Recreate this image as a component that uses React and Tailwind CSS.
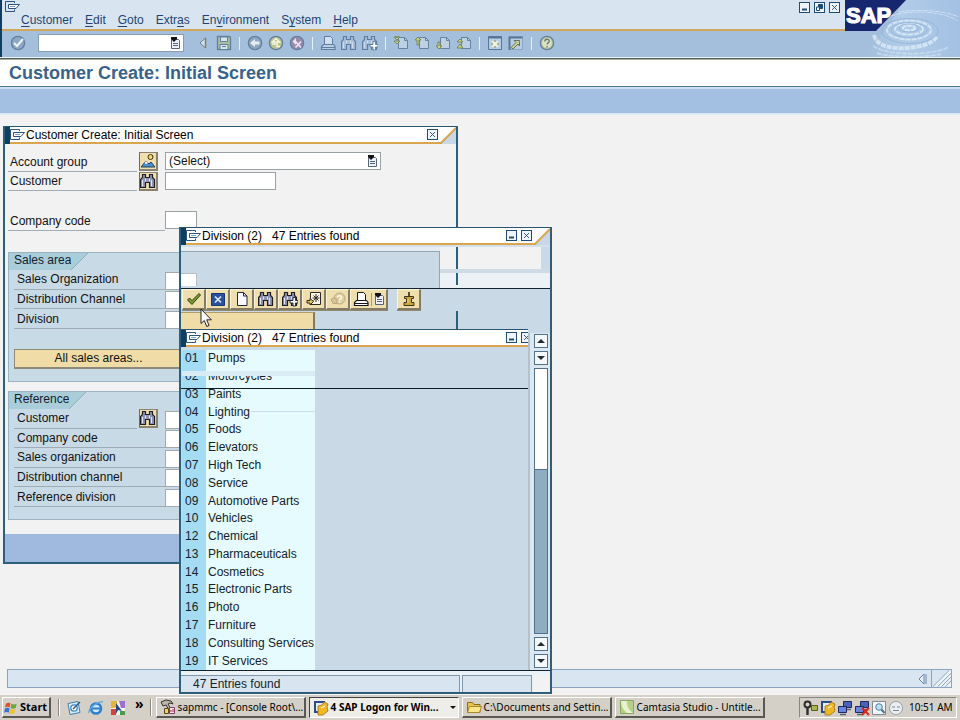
import React from 'react';
import { clsx } from 'clsx';

const MENUS = [
  ['', 'C', 'ustomer'],
  ['', 'E', 'dit'],
  ['', 'G', 'oto'],
  ['Extr', 'a', 's'],
  ['En', 'v', 'ironment'],
  ['S', 'y', 'stem'],
  ['', 'H', 'elp'],
];

const DIVISIONS = [
  ['01', 'Pumps'],
  ['02', 'Motorcycles'],
  ['03', 'Paints'],
  ['04', 'Lighting'],
  ['05', 'Foods'],
  ['06', 'Elevators'],
  ['07', 'High Tech'],
  ['08', 'Service'],
  ['09', 'Automotive Parts'],
  ['10', 'Vehicles'],
  ['12', 'Chemical'],
  ['13', 'Pharmaceuticals'],
  ['14', 'Cosmetics'],
  ['15', 'Electronic Parts'],
  ['16', 'Photo'],
  ['17', 'Furniture'],
  ['18', 'Consulting Services'],
  ['19', 'IT Services'],
];

/* ─── Icons ───────────────────────────────────────────────────────── */

function Icon({ children, className = 'size-4' }) {
  return (
    <svg viewBox="0 0 16 16" className={clsx('block shrink-0', className)} fill="none" aria-hidden="true">
      {children}
    </svg>
  );
}

function MenuMark() {
  return (
    <svg viewBox="0 0 15 11" className="block h-[11px] w-[15px] shrink-0" fill="none" stroke="#2b5580" aria-hidden="true">
      <path d="M9.500 2V.5h-9v10h9V8.500" />
      <path d="M3.500 3.500h11L11 7.500H3.500z" fill="#fff" />
      <path d="M5 5.500h5" stroke="#7fa0c4" />
    </svg>
  );
}

function PickIcon() {
  return (
    <svg viewBox="0 0 11 12" className="block h-[12px] w-[11px] shrink-0" fill="none" aria-hidden="true">
      <path d="M1.500 2.500h7l1 1v8h-8z" fill="#eef1f7" stroke="#56657c" />
      <path d="M3 6.500h5M3 8.500h5" stroke="#56657c" />
      <path d="M1 0h6v2L4 5 1 2z" fill="#111" />
    </svg>
  );
}

function Binoculars({ plus, muted }) {
  const line = muted ? '#5f7da5' : '#1d1d26';
  const fill = muted ? '#a9bfd8' : '#8f93b4';
  return (
    <Icon>
      <path
        d="M2.500 1.500h3v3h4v-3h3v3l2 2v8h-5v-5h-4v5h-5v-8l2-2z"
        fill={fill}
        stroke={line}
        strokeWidth="1.200"
      />
      <path d="M2.500 7v6M11.500 7v6M5.500 5.500v3M9.500 5.500v3" stroke={muted ? '#cfdbe9' : '#e3e4ee'} />
      {plus && <path d="M11 6.500h2.500v3H16V12h-2.500v3H11v-3H8V9.500h3z" fill="#fff" stroke={line} strokeWidth=".9" />}
    </Icon>
  );
}

function Printer({ muted }) {
  const line = muted ? '#5f7da5' : '#16161c';
  return (
    <Icon>
      <path d="M4.500 9.500v-8h6l2 2v6z" fill={muted ? '#d2e0ee' : '#fff'} stroke={line} />
      <path d="M3.500 9.500h10l1.500 2v3H1.500v-3z" fill={muted ? '#bccfe2' : '#fff'} stroke={line} strokeWidth="1.200" />
      <path d="M2 12.500h13" stroke={line} />
    </Icon>
  );
}

function RoundIcon({ fill, children }) {
  return (
    <Icon>
      <circle cx="8" cy="8" r="6.600" fill={fill} stroke="#66809f" strokeWidth="1.400" />
      {children}
    </Icon>
  );
}

function PageTurn({ kind }) {
  const arrows = {
    first: 'M1 2h6L4 5zM1 6h6L4 9zM2 2h4',
    prev: 'M1 5l3-3 3 3H5v5H3V5z',
    next: 'M3 7h2v4h2l-3 3-3-3h2z',
    last: 'M1 7l3-3 3 3zM1 13l3-4 3 4z',
  };
  return (
    <Icon>
      <path d="M5.500 2.500h6l3 3v8h-9z" fill="#bdd0e4" stroke="#66839f" />
      <path d="M11.500 2.500v3h3" stroke="#66839f" />
      <path d={arrows[kind]} fill="#c8d27c" stroke="#718454" strokeWidth=".9" />
    </Icon>
  );
}

function MiniButton({ kind, label }) {
  return (
    <button type="button" aria-label={label} className="size-[11px] shrink-0">
      <svg viewBox="0 0 11 11" className="block size-[11px]" fill="none" stroke="#1f4c74">
        <rect x=".5" y=".5" width="10" height="10" fill="#eef4fa" />
        {kind === 'min' && <path d="M3 7.500h5" strokeWidth="2" />}
        {kind === 'restore' && (
          <>
            <path d="M4.500 2.500h4v4h-4z" fill="#1f4c74" />
            <path d="M2.500 5h3v3.500h-3z" fill="#fff" />
          </>
        )}
        {kind === 'close' && <path d="M3 3l5 5M8 3L3 8" strokeWidth=".9" />}
      </svg>
    </button>
  );
}

/* ─── Main window header ──────────────────────────────────────────── */

function Divider() {
  return <span className="mx-[7px] h-[13px] w-px bg-[#e6eef6]" />;
}

function ToolButton({ label, children }) {
  return (
    <button type="button" aria-label={label} className="shrink-0">
      {children}
    </button>
  );
}

function StandardToolbar() {
  return (
    <div className="flex h-[26px] items-center bg-[#a3bfdc] pb-[2px] pl-[8px]">
      <ToolButton label="Enter">
        <RoundIcon fill="#8ea9c6">
          <path d="M4 8l3 3 6-7" stroke="#eef3f8" strokeWidth="2" />
        </RoundIcon>
      </ToolButton>
      <div className="ml-[12px] flex h-[18px] w-[146px] items-center border border-[#8a9fb5] bg-white pr-[2px]">
        <input aria-label="Command" className="h-full min-w-0 flex-1 bg-white px-1 text-[12px] outline-none" />
        <PickIcon />
      </div>
      <div className="ml-[12px] flex items-center gap-[4px]">
        <ToolButton label="Collapse">
          <Icon>
            <path d="M9.500 3v10L4 8z" fill="#d5e1ee" stroke="#6d8093" />
            <path d="M9.500 3v10" stroke="#8a7f5a" strokeWidth="1.500" />
          </Icon>
        </ToolButton>
        <ToolButton label="Save">
          <Icon>
            <path d="M1.500 1.500h12l1 1v12h-13z" fill="#a9bf9f" stroke="#65809a" strokeWidth="1.300" />
            <path d="M4.500 2h7v4.500h-7z" fill="#d9e6f1" stroke="#65809a" />
            <path d="M4 9.500h8v5H4z" fill="#d9e6f1" stroke="#65809a" />
            <path d="M6 11.500h4" stroke="#65809a" />
          </Icon>
        </ToolButton>
      </div>
      <Divider />
      <div className="flex gap-[5px]">
        <ToolButton label="Back">
          <RoundIcon fill="#8fa6bf">
            <path d="M12.500 6.500H8V4L3 8l5 4V9.500h4.500z" fill="#e6edf4" />
          </RoundIcon>
        </ToolButton>
        <ToolButton label="Exit">
          <RoundIcon fill="#bdc48e">
            <path d="M8 3.500L4.500 7H7v2H4M8 3.500L11.500 7H9v4.500h3" stroke="#f3f5e4" strokeWidth="1.500" />
          </RoundIcon>
        </ToolButton>
        <ToolButton label="Cancel">
          <RoundIcon fill="#9a8bad">
            <path d="M7 3L3.500 6.500 7 10z" fill="#e9e4f0" />
            <path d="M6.500 6.500l5.500 6M12 6.500l-5.500 6" stroke="#eee8f3" strokeWidth="1.600" />
          </RoundIcon>
        </ToolButton>
      </div>
      <Divider />
      <div className="flex gap-[5px]">
        <ToolButton label="Print"><Printer muted /></ToolButton>
        <ToolButton label="Find"><Binoculars muted /></ToolButton>
        <ToolButton label="Find next"><Binoculars muted plus /></ToolButton>
      </div>
      <Divider />
      <div className="flex gap-[5px]">
        <ToolButton label="First page"><PageTurn kind="first" /></ToolButton>
        <ToolButton label="Previous page"><PageTurn kind="prev" /></ToolButton>
        <ToolButton label="Next page"><PageTurn kind="next" /></ToolButton>
        <ToolButton label="Last page"><PageTurn kind="last" /></ToolButton>
      </div>
      <Divider />
      <div className="flex gap-[5px]">
        <ToolButton label="New session">
          <Icon>
            <path d="M1.500 1.500h13v13h-13z" fill="#b9cde1" stroke="#587698" />
            <path d="M1.500 2.500h13" stroke="#587698" strokeWidth="2" />
            <path d="M8 5v8M4 9h8M5 6l6 6M11 6l-6 6" stroke="#f1f3dc" strokeWidth="1.600" />
            <path d="M8 5v2M8 11v2M4 9h2M10 9h2" stroke="#6c7b62" />
          </Icon>
        </ToolButton>
        <ToolButton label="Create shortcut">
          <Icon>
            <path d="M1.500 14.500v-13h13v13z" fill="#b9cde1" stroke="#8ba6c2" />
            <path d="M1.500 15V2.500h13" stroke="#587698" strokeWidth="2" />
            <path d="M6 5.500h5.500V11L10 9l-5 5-2-1.500 5-5z" fill="#c8d29a" stroke="#657754" />
          </Icon>
        </ToolButton>
      </div>
      <Divider />
      <ToolButton label="Help">
        <RoundIcon fill="#c0c99a">
          <circle cx="8" cy="8" r="4.800" fill="#dce1c2" />
          <path d="M5.800 6.500c0-3 4.500-3 4.500-.3 0 1.500-2.200 1.500-2.200 3.300M8 11v1.500" stroke="#667e7c" strokeWidth="1.400" />
        </RoundIcon>
      </ToolButton>
    </div>
  );
}

function SapBanner() {
  return (
    <svg viewBox="0 0 115 57" className="block h-[57px] w-[115px] shrink-0" role="img" aria-label="SAP">
      <defs>
        <linearGradient id="pond" x1="0" x2="1">
          <stop offset="0" stopColor="#a3bfdc" />
          <stop offset=".4" stopColor="#b1cce8" />
          <stop offset="1" stopColor="#a3c0e3" />
        </linearGradient>
      </defs>
      <path d="M0 0h115v57H0z" fill="#a3bfdc" />
      <path d="M60 0h55v57H22z" fill="url(#pond)" />
      <g fill="none" stroke="#dceaf8" strokeDasharray="5 1">
        <ellipse cx="64" cy="28" rx="6" ry="2.500" strokeWidth="2" />
        <ellipse cx="64" cy="29" rx="14" ry="5.500" strokeWidth="1.500" />
        <ellipse cx="64" cy="30" rx="22" ry="9.500" strokeWidth="2" opacity=".8" />
        <path d="M29 35c2 11 18 14 32 13s27-4 31-12" strokeWidth="4" opacity=".8" />
        <path d="M46 16c18-6 50-6 67 5M54 12c18-3 44-2 60 5" opacity=".7" />
        <path d="M28 46c12 9 56 11 76 1M32 53c16 5 46 5 64 1" strokeWidth="2" opacity=".5" />
      </g>
      <g fill="none" stroke="#8fb0d6" opacity=".7">
        <ellipse cx="64" cy="28" rx="10" ry="4" />
        <ellipse cx="64" cy="30" rx="18" ry="7.500" />
        <ellipse cx="65" cy="31" rx="28" ry="12.500" />
      </g>
      <path d="M0 0h61L31 31H0z" fill="#16266f" />
      <text
        x="1"
        y="23"
        fill="#fff"
        stroke="#fff"
        strokeWidth="1.200"
        className="font-['Liberation_Sans',Arial,sans-serif] text-[22px] font-bold"
      >
        SAP
      </text>
    </svg>
  );
}

function MainHeader() {
  return (
    <header>
      <div className="flex border-l-2 border-[#0e3f63] bg-[#d8e5f0]">
        <div className="min-w-0 flex-1">
          <div className="flex h-[13px] items-start justify-between pl-[3px] pr-[5px]">
            <button type="button" aria-label="Window menu" className="pt-px"><MenuMark /></button>
            <div className="flex gap-[4px] pt-[2px]">
              <MiniButton kind="min" label="Minimize" />
              <MiniButton kind="restore" label="Restore" />
              <MiniButton kind="close" label="Close" />
            </div>
          </div>
          <nav className="flex h-[18px] items-start gap-[12px] border-b-2 border-[#d2a75a] pl-[19px] leading-[15px] text-[#1f4474]">
            {MENUS.map(([pre, key, post]) => (
              <button type="button" key={pre + key + post}>
                {pre}<span className="underline underline-offset-2">{key}</span>{post}
              </button>
            ))}
          </nav>
          <StandardToolbar />
        </div>
        <SapBanner />
      </div>
      <div className="h-[3px] border-b border-t border-b-[#a9ad9b] border-t-[#eef4f8] bg-[#4c615f]" />
      <h1 className="h-[26px] bg-white pl-[9px] text-[18px] font-bold leading-[26px] text-[#38628a]">
        Customer Create: Initial Screen
      </h1>
      <div className="h-[29px] border-b-2 border-t border-b-[#dde9f4] border-t-[#4f7690] bg-[#a3bfe1]">
        <div className="h-[2px] bg-[#cfdff0]" />
      </div>
    </header>
  );
}

/* ─── Shared window parts ─────────────────────────────────────────── */

function TitleBar({ title, children, corner = true }) {
  return (
    <div className="flex h-[18px] border-t border-[#2a5670]">
      <div className="w-[5px] shrink-0 bg-[#0d3f60]" />
      <div className="flex min-w-0 flex-1 items-center border-b-2 border-[#d9a54e] bg-white">
        <MenuMark />
        <h2 className="ml-px min-w-0 flex-1 whitespace-pre leading-[14px] text-black">{title}</h2>
        <div className="flex items-center gap-[4px]">{children}</div>
      </div>
      {corner && (
        <svg viewBox="0 0 18 17" className="block h-[17px] w-[18px] shrink-0" aria-hidden="true">
          <path d="M0 0h18v17H0z" fill="#c9d8e6" />
          <path d="M0 0h18L2 16H0z" fill="#fff" />
          <path d="M0 16h3L18 1" fill="none" stroke="#d9a54e" strokeWidth="2" />
        </svg>
      )}
    </div>
  );
}

function PickButton({ label, children }) {
  return (
    <button
      type="button"
      aria-label={label}
      className="flex size-[19px] shrink-0 items-center justify-center border border-b-2 border-r-2 border-[#8a8270] border-l-[#6f6a5c] bg-[#f0dfae]"
    >
      {children}
    </button>
  );
}

function Field({ id, label, picker, className = 'w-[32px]' }) {
  return (
    <div className="flex items-stretch">
      <label
        htmlFor={id}
        className={clsx('flex flex-1 items-center border-b border-[#9fabb5] pl-[3px]', picker && 'mr-[2px]')}
      >
        {label}
      </label>
      {picker && <div className="mr-[7px] flex items-center">{picker}</div>}
      <div className="flex w-[275px] items-end">
        <input id={id} className={clsx('h-[18px] border border-[#a3a9ad] bg-white px-[3px] outline-none', className)} />
      </div>
    </div>
  );
}

function Group({ title, children }) {
  return (
    <section className="border border-[#9db3c2] bg-[#c9dae7]">
      <div className="flex h-[17px]">
        <h3 className="bg-[#a9cdd9] pl-[5px] leading-[15px] text-[#13222d]">{title}</h3>
        <svg viewBox="0 0 18 17" className="block h-[17px] w-[18px]" aria-hidden="true">
          <path d="M0 0h17L0 17z" fill="#a9cdd9" />
          <path d="M17 0L0 17" stroke="#8db0bf" />
        </svg>
      </div>
      {children}
    </section>
  );
}

/* ─── Customer create dialog ──────────────────────────────────────── */

function CustomerDialog() {
  return (
    <section className="absolute left-[3px] top-[11px] flex h-[438px] w-[455px] flex-col border-2 border-t-0 border-[#2d5f7c] bg-[#f1f2f1]">
      <TitleBar title="Customer Create: Initial Screen">
        <MiniButton kind="close" label="Close" />
      </TitleBar>
      <div className="flex-1 pl-[3px] pr-[15px] pt-[8px]">
        <div className="flex h-[20px]">
          <label htmlFor="account-group" className="flex w-[129px] items-center border-b border-[#9fabb5] pl-[2px]">
            Account group
          </label>
          <div className="ml-[2px] mr-[7px]">
            <PickButton label="Account group overview">
              <Icon>
                <circle cx="10.500" cy="4" r="2.500" fill="#ffd95c" stroke="#33301f" />
                <path d="M1 14l5-6 3 3 2-2 4 5z" fill="#4d8fc9" stroke="#20405f" />
                <path d="M4.500 10L6 8l2 2-2 1z" fill="#fff" />
              </Icon>
            </PickButton>
          </div>
          <div className="flex h-[18px] w-[216px] items-center border border-[#9aa1a5] bg-white pr-[2px]">
            <select id="account-group" className="h-full min-w-0 flex-1 appearance-none bg-white pl-[3px] leading-[16px] outline-none">
              <option>(Select)</option>
            </select>
            <PickIcon />
          </div>
        </div>
        <div className="flex h-[19px]">
          <label htmlFor="customer" className="flex w-[129px] items-center border-b border-[#9fabb5] pl-[2px]">
            Customer
          </label>
          <div className="ml-[2px] mr-[7px]">
            <PickButton label="Find customer"><Binoculars /></PickButton>
          </div>
          <input id="customer" className="h-[18px] w-[111px] border border-[#9aa1a5] bg-white px-[3px] outline-none" />
        </div>
        <div className="mt-[20px] flex h-[20px]">
          <label htmlFor="company" className="flex w-[157px] items-center border-b border-[#9fabb5] pl-[2px]">
            Company code
          </label>
          <input id="company" className="h-[18px] w-[32px] border border-[#9aa1a5] bg-white px-[3px] outline-none" />
        </div>

        <div className="mt-[21px]">
          <Group title="Sales area">
            <div className="grid h-[59px] auto-rows-fr pl-[5px]">
              <Field id="sales-org" label="Sales Organization" />
              <Field id="channel" label="Distribution Channel" />
              <Field id="division" label="Division" />
            </div>
            <div className="mb-[12px] mt-[20px] px-[5px]">
              <button
                type="button"
                className="h-[20px] w-full border border-b-2 border-[#8f8a78] bg-[#f0dca6] pr-[252px] leading-[17px]"
              >
                All sales areas...
              </button>
            </div>
          </Group>
        </div>

        <div className="mt-[9px]">
          <Group title="Reference">
            <div className="mb-[12px] grid h-[98px] auto-rows-fr pl-[5px]">
              <Field
                id="ref-customer"
                label="Customer"
                picker={<PickButton label="Find reference customer"><Binoculars /></PickButton>}
                className="w-[111px]"
              />
              <Field id="ref-company" label="Company code" />
              <Field id="ref-org" label="Sales organization" />
              <Field id="ref-channel" label="Distribution channel" />
              <Field id="ref-division" label="Reference division" />
            </div>
          </Group>
        </div>
      </div>
      <div className="h-[28px] bg-[#a0badf]" />
    </section>
  );
}

/* ─── Division value list ─────────────────────────────────────────── */

function ListButton({ label, wide, children }) {
  return (
    <button
      type="button"
      aria-label={label}
      className={clsx(
        'flex h-[21px] shrink-0 items-center justify-center border border-b-2 border-r-2 border-[#857b62] border-l-[#fdf6dc] border-t-[#fdf6dc] bg-[#f0dfae]',
        wide ? 'w-[38px] gap-[2px]' : 'w-[24px]',
      )}
    >
      {children}
    </button>
  );
}

function ListToolbar() {
  return (
    <div className="flex h-[23px] items-start border-t border-[#10222e] bg-[#c9d9e6] pl-px">
      <div className="flex bg-[#8f8872] pb-px">
        <ListButton label="Copy">
          <Icon>
            <path d="M1.500 9l2-2L6 9.500 13 2.500l1.500 1.500L6 13.500z" fill="#7d9a2c" stroke="#2f4016" />
          </Icon>
        </ListButton>
        <ListButton label="Close">
          <Icon>
            <path d="M1.500 2.500h13v12h-13z" fill="#2a50a0" stroke="#1a3573" />
            <path d="M5 5.500l6 6M11 5.500l-6 6" stroke="#dce7fa" strokeWidth="1.700" />
          </Icon>
        </ListButton>
        <ListButton label="New selection">
          <Icon>
            <path d="M3.500 1.500h6l3.500 3.500v9.500H3.500z" fill="#f7f9ff" stroke="#23263a" />
            <path d="M9.500 1.500V5H13" stroke="#23263a" />
          </Icon>
        </ListButton>
        <ListButton label="Find"><Binoculars /></ListButton>
        <ListButton label="Find next"><Binoculars plus /></ListButton>
        <ListButton label="Insert in personal list">
          <Icon>
            <path d="M4.500 1.500h10v12h-10z" fill="#fdf8e6" stroke="#2b2920" />
            <path d="M10 3v8M6.500 7h7M7.500 4.500l5 5M12.500 4.500l-5 5" stroke="#2b2920" />
            <path d="M1 9.500h3V7.500l3.500 3L4 14v-2H1z" fill="#e7cb5a" stroke="#2b2920" />
          </Icon>
        </ListButton>
        <ListButton label="Help">
          <Icon>
            <circle cx="9.500" cy="7.500" r="5.500" fill="#e0cfa4" stroke="#b9a782" />
            <path d="M7.500 6.500c0-2.500 4-2.500 4 0 0 1.300-2 1.500-2 3M9.500 10.500V12" stroke="#fff7dd" strokeWidth="1.500" />
            <path d="M1 8.500l3-2 3 2v4H3z" fill="#d7c39a" stroke="#b9a782" />
          </Icon>
        </ListButton>
        <ListButton label="Print" wide>
          <Printer />
          <span className="h-[13px] w-px bg-[#a59a7c]" />
          <PickIcon />
        </ListButton>
      </div>
      <div className="ml-[9px] bg-[#8f8872] pb-px">
        <ListButton label="Hold list">
          <Icon>
            <path d="M8 1v5" stroke="#2c281b" strokeWidth="1.600" />
            <path d="M3.500 5.500h9v2h-2v4h2.500v3H3v-3h2.500v-4h-2z" fill="#c9a741" stroke="#40371a" />
            <path d="M7 8v4" stroke="#f3dd96" />
          </Icon>
        </ListButton>
      </div>
    </div>
  );
}

function ScrollArrow({ up, label }) {
  return (
    <button
      type="button"
      aria-label={label}
      className="flex h-[14px] w-[14px] shrink-0 items-center justify-center border border-[#53718b] bg-[#f4f8fb]"
    >
      <svg viewBox="0 0 8 4" className="block h-[4px] w-[8px]" aria-hidden="true">
        <path d={up ? 'M0 4h8L4 0z' : 'M0 0h8L4 4z'} fill="#222c35" />
      </svg>
    </button>
  );
}

function DivisionTable() {
  return (
    <div className="relative flex-1 bg-[#c9d9e6] pl-px pt-[3px]">
      <table className="h-[320px] w-[133px] border-collapse bg-[#e6fbfd] text-[#13222d]">
        <tbody>
          {DIVISIONS.map(([code, name]) => (
            <tr key={code}>
              <td className="w-[24px] bg-[#a4dcf4] p-0 pl-[3px] leading-[15px]">{code}</td>
              <td className="whitespace-nowrap p-0 pl-[2px] leading-[15px]">{name}</td>
            </tr>
          ))}
        </tbody>
      </table>
      {/* repaint seams left over the rows */}
      <div className="absolute left-px top-[24px] h-[5px] w-[133px] bg-[#d9ecf5]" />
      <div className="absolute inset-x-0 top-[41px] h-px bg-[#101c26]" />
      <div className="absolute left-[70px] top-[64px] h-px w-[64px] bg-[#c6dfe8]" />
    </div>
  );
}

function StaleBackdrop() {
  return (
    <div className="flex h-[43px] bg-[#d3e0ea] pt-[2px]">
      <div className="w-[259px] border-t-[4px] border-[#e6ecf0]">
        <div className="flex h-[37px] items-end border-r border-t border-[#8fa8b6] bg-[#c9d9e6]">
          <div className="mb-[2px] h-[13px] w-[16px] border-r border-t border-[#b5c0c8] bg-white" />
        </div>
      </div>
      <div className="flex flex-1 flex-col bg-[#c9d9e6]">
        <div className="mr-[9px] flex h-[22px] bg-[#f1f2f1] pl-[16px]">
          <div className="w-[2px] bg-[#2d5f7c]" />
        </div>
        <div className="h-[4px] bg-[#cfdbe4]" />
        <div className="flex flex-1 bg-[#ebf1f5] pl-[16px]">
          <div className="mb-[3px] w-[2px] bg-[#2d5f7c]" />
        </div>
      </div>
    </div>
  );
}

function DivisionWindow() {
  return (
    <section className="absolute left-[179px] top-[112px] flex h-[467px] w-[373px] flex-col border-2 border-t-0 border-[#2d5f7c] bg-[#c9d9e6]">
      <TitleBar title="Division (2)   47 Entries found">
        <MiniButton kind="min" label="Minimize" />
        <MiniButton kind="close" label="Close" />
      </TitleBar>
      <StaleBackdrop />
      <ListToolbar />
      <div className="flex flex-1">
        <div className="flex min-w-0 flex-1 flex-col">
          <div className="flex h-[18px]">
            <div className="mt-px w-[134px] border-r-2 border-t border-[#b09d70] border-r-[#857b62] bg-[#f0dca6]" />
            <div className="ml-[141px] w-[2px] bg-[#2d5f7c]" />
          </div>
          <TitleBar title="Division (2)   47 Entries found" corner={false}>
            <MiniButton kind="min" label="Minimize list" />
            <div className="flex h-[11px] w-[7px] overflow-hidden">
              <MiniButton kind="close" label="Close list" />
            </div>
          </TitleBar>
          <DivisionTable />
        </div>
        <div className="mt-[22px] flex w-[22px] flex-col items-center border-l-2 border-[#b3c1cd] bg-[#dce8f1] pl-px pt-px">
          <ScrollArrow up label="Scroll up" />
          <div className="h-[3px]" />
          <ScrollArrow label="Scroll down" />
          <div className="mb-[3px] mt-[3px] flex w-[14px] flex-1 flex-col border border-[#53718b] bg-[#8fadc1]">
            <div className="h-[101px] border-b border-[#53718b] bg-white" />
          </div>
          <ScrollArrow up label="Page up" />
          <div className="h-[3px]" />
          <div className="pb-[2px]">
            <ScrollArrow label="Page down" />
          </div>
        </div>
      </div>
      <div className="flex h-[22px] gap-[2px] border-t border-[#10222e] bg-[#eaf1f7] pt-[4px]">
        <div className="flex flex-1 items-center border-r border-t border-[#7f97ad] bg-[#d8e5f0] pl-[12px] text-[#13222d]">
          47 Entries found
        </div>
        <div className="w-[70px] border border-b-0 border-[#7f97ad] bg-[#d8e5f0]" />
        <div className="w-[16px] bg-[#f1f2f1]" />
      </div>
    </section>
  );
}

/* ─── Taskbar ─────────────────────────────────────────────────────── */

function SapLogonIcon() {
  return (
    <Icon>
      <path d="M1 1h11v12H1z" fill="#2b4d86" />
      <path d="M3 3h7v8H3z" fill="#e7edf5" />
      <path d="M5 6l4-1 2-3 4 2-1 3 1 4-5 4H5z" fill="#f2b824" stroke="#a66f10" strokeWidth=".8" />
      <path d="M8 8l4-2" stroke="#fff" />
    </Icon>
  );
}

function TaskButton({ icon, active, children }) {
  return (
    <button
      type="button"
      className={clsx(
        'flex h-[21px] w-[150px] min-w-0 items-center gap-[2px] border pl-[3px] text-left text-[10px]',
        active
          ? 'border-[#fff] border-l-[#404040] border-t-[#404040] bg-[#efede8] font-bold'
          : 'border-b-2 border-r-2 border-[#5a5852] border-l-white border-t-white bg-[#d4d0c8]',
      )}
    >
      {icon}
      <span className="min-w-0 flex-1 whitespace-nowrap">{children}</span>
      {active && (
        <svg viewBox="0 0 6 3" className="mr-[2px] h-[3px] w-[6px] shrink-0" aria-hidden="true">
          <path d="M0 0h6L3 3z" fill="#111" />
        </svg>
      )}
    </button>
  );
}

function Monitors({ off }) {
  return (
    <Icon>
      <path d="M6.500 1.500h8v6h-8z" fill="#4a62b8" stroke="#1f2a5c" />
      <path d="M1.500 6.500h8v6h-8z" fill="#6a86dd" stroke="#1f2a5c" />
      <path d="M3 14.500h6M10 9.500h4" stroke="#5a5f7c" strokeWidth="1.500" />
      {off && <path d="M8 8l7 7M15 8l-7 7" stroke="#d42a1f" strokeWidth="2" />}
    </Icon>
  );
}

function Taskbar() {
  return (
    <footer className="flex h-[26px] items-center border-t border-[#f7f6f2] bg-[#d4d0c8] pl-[2px] pr-[3px] font-['Noto_Sans',Tahoma,sans-serif] text-[11px] text-black">
      <button
        type="button"
        className="flex h-[21px] w-[49px] items-center gap-px border border-b-2 border-r-2 border-[#5a5852] border-l-white border-t-white pl-px font-bold"
      >
        <Icon className="size-[15px]">
          <path d="M2 4c2-1.500 3.500-1.500 5-.5L6 8C4.500 7 3 7 1 8z" fill="#d9542b" />
          <path d="M8 4c2 1 3.500 1 5.500 0L12.500 8.500c-2 1-3.500 1-5.500 0z" fill="#6aa63a" />
          <path d="M1 9c2-1 3.500-1 5 0l-1 4.500c-1.500-1-3-1-5 0z" fill="#3f6fcf" />
          <path d="M6.800 9.500c2 1 3.500 1 5.500 0L11 14c-2 1-3.500 1-5.500 0z" fill="#efc02f" />
        </Icon>
        Start
      </button>
      <span className="ml-[7px] h-[17px] w-[2px] border-l border-[#8a877f] bg-white" />
      <div className="ml-[6px] flex gap-[6px]">
        <button type="button" aria-label="Show desktop">
          <Icon>
            <path d="M2 3.500L12 1.500l2 11-10 2z" fill="#d8ecf8" stroke="#3f7fb0" />
            <circle cx="8" cy="8" r="3.200" fill="#fff" stroke="#3f86bd" strokeWidth="1.300" />
            <path d="M7 9l7-7" stroke="#2a5b88" strokeWidth="1.500" />
          </Icon>
        </button>
        <button type="button" aria-label="Internet Explorer">
          <Icon>
            <circle cx="8" cy="8.500" r="5" stroke="#2f7fce" strokeWidth="2.600" fill="#cfe6f8" />
            <path d="M4 8.500h9" stroke="#2f7fce" strokeWidth="2" />
            <path d="M1 13C0 9 9 1 15 2" stroke="#5aa9e2" strokeWidth="1.300" />
          </Icon>
        </button>
        <button type="button" aria-label="Paint">
          <Icon>
            <path d="M1 1h14v14H1z" fill="#f7f3ee" />
            <path d="M1 1h6v5l-2 2H1z" fill="#e2b53a" />
            <path d="M9 1h6v7h-4z" fill="#9a6fd0" />
            <path d="M1 9h5v6H1z" fill="#d4443e" />
            <path d="M10 11h5v4h-5z" fill="#4c9a4a" />
            <path d="M6 3l6 8-4-1-2 4z" fill="#26467f" />
          </Icon>
        </button>
      </div>
      <button type="button" aria-label="More" className="ml-[9px] pb-[7px] text-[14px] font-bold leading-[14px]">»</button>
      <span className="ml-[6px] h-[17px] w-[2px] border-l border-[#8a877f] bg-white" />
      <div className="ml-[4px] flex min-w-0 flex-1 gap-[3px]">
        <TaskButton
          icon={
            <Icon>
              <path d="M1 3l5-2 5 1 2 3-3-1-2 1 4 7-2 1-4-7-3 1z" fill="#b9b5a8" stroke="#33312b" />
              <path d="M4.500 9.500h4v5h-4z" fill="#efd25b" stroke="#57491a" />
              <path d="M9.500 8.500h5v6h-5z" fill="#f4e6ee" stroke="#8a3a62" />
              <path d="M11 13v-2M13 13v-3" stroke="#b02f55" />
            </Icon>
          }
        >
          sapmmc - [Console Root\...
        </TaskButton>
        <TaskButton active icon={<SapLogonIcon />}>4 SAP Logon for Win...</TaskButton>
        <TaskButton
          icon={
            <Icon>
              <path d="M1.500 3.500h5l1.500 2h6v8h-12.500z" fill="#e9c34f" stroke="#8a6c1c" />
              <path d="M3.500 7.500h12l-2 6h-12z" fill="#fbe58a" stroke="#a8872b" />
            </Icon>
          }
        >
          C:\Documents and Settin...
        </TaskButton>
        <TaskButton
          icon={
            <Icon>
              <path d="M1.500 1.500h13v13h-13z" fill="#b5cf86" stroke="#8ca65e" />
              <path d="M2 2h6c0 6 2 9 6 12H8C4 11 2 7 2 2z" fill="#e7f1cf" />
            </Icon>
          }
        >
          Camtasia Studio - Untitle...
        </TaskButton>
      </div>
      <div className="flex h-[21px] w-[158px] shrink-0 items-center gap-px border border-l-[#8a877f] border-t-[#8a877f] border-white pl-[3px]">
        <Icon>
          <circle cx="4.500" cy="4.500" r="3" stroke="#2d2d28" strokeWidth="2" fill="#d4d0c8" />
          <path d="M4.500 8v7" stroke="#2d2d28" strokeWidth="2.400" />
          <path d="M8.500 5.500h6v5h-6z" fill="#a9b74e" stroke="#565d26" />
        </Icon>
        <SapLogonIcon />
        <Monitors />
        <Monitors off />
        <Icon>
          <path d="M1.500 1.500h13v13h-13z" fill="#f3f6fa" stroke="#7f8894" />
          <circle cx="8" cy="7" r="3.300" fill="#bfe0f2" stroke="#4f7fa3" />
          <path d="M10.500 9.500l3 3.500" stroke="#4f6f88" strokeWidth="2" />
        </Icon>
        <Icon>
          <circle cx="8" cy="8" r="6.500" fill="#eceff2" stroke="#9aa2ab" />
          <path d="M4 7h3M9 7h3M5 10.500h6" stroke="#7b858f" />
        </Icon>
        <time className="flex-1 whitespace-nowrap pl-[4px] text-[10px]">10:51 AM</time>
      </div>
    </footer>
  );
}

/* ─── App ─────────────────────────────────────────────────────────── */

export default function App() {
  return (
    <div className="flex min-h-screen flex-col bg-[#f1f2f1] font-['Liberation_Sans',Arial,sans-serif] text-[12px] text-[#111]">
      <MainHeader />
      <main className="relative flex flex-1 flex-col justify-end">
        <div className="mb-[6px] ml-[7px] mr-[8px] flex h-[19px] border border-[#8ba3be] bg-[#d9e6f2]">
          <div className="flex flex-1 items-center justify-end pr-[4px]">
            <button type="button" aria-label="Expand status bar">
              <svg viewBox="0 0 9 12" className="block h-[12px] w-[9px]" aria-hidden="true">
                <path d="M6 1v10L1 6z" fill="#e6eff7" stroke="#6c86a3" />
                <path d="M8 1v10" stroke="#6c86a3" />
              </svg>
            </button>
          </div>
          <svg viewBox="0 0 20 17" className="block h-[17px] w-[20px] border-l border-[#8ba3be]" aria-hidden="true">
            <path d="M0 17L17 0h3v17z" fill="#eef3f7" />
            <path d="M1 17L18 0M6 17L20 3M10 17L20 7M14 17l6-6" stroke="#7f99b5" />
          </svg>
        </div>
        <CustomerDialog />
        <DivisionWindow />
        <svg viewBox="0 0 12 20" className="absolute left-[200px] top-[193px] h-[20px] w-[12px]" aria-hidden="true">
          <path d="M1 1v14.500l3.300-3 2.400 6 2.400-1-2.400-5.700h4.600z" fill="#fff" stroke="#222" />
        </svg>
      </main>
      <Taskbar />
    </div>
  );
}
